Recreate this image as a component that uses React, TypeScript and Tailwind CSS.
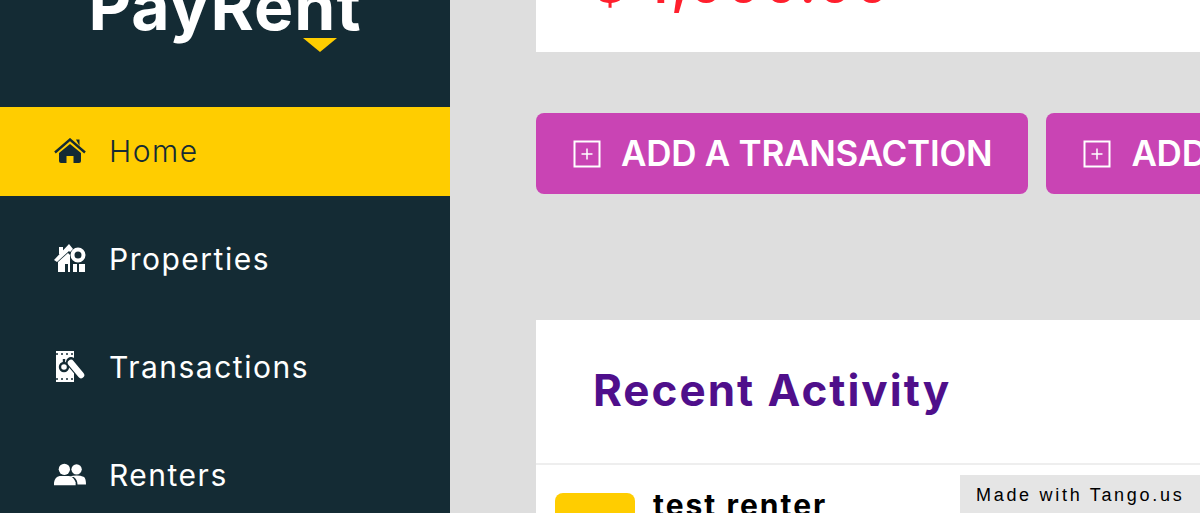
const font = "font-['Inter','Liberation_Sans',sans-serif]";

function HomeIcon() {
  return (
    <svg viewBox="0 0 32 25" className="w-8 h-[25px] text-[#142b34]" fill="currentColor">
      <path d="M22 1.5 H25.5 V8" />
      <path d="M1 14.5 L16 1.5 L31 14.5" fill="none" stroke="currentColor" strokeWidth="2.4" />
      <path d="M5 15 L16 6 L27 15 V23 Q27 25 25 25 H19.5 V18 H12.5 V25 H7 Q5 25 5 23 Z" />
    </svg>
  );
}

function PropertiesIcon() {
  return (
    <svg viewBox="0 0 32 32" className="w-8 h-8 text-white" fill="currentColor">
      {/* roof + chimney */}
      <path d="M0 17 L15 1 L19 6 L16 9 L15 8 L3 19 Z" />
      <rect x="5" y="4" width="4" height="7" />
      {/* walls with window */}
      <path d="M4 19 L14 10 L16 12 V29 H4 Z" />
      <rect x="11" y="21" width="3" height="8" fill="#142b34" />
      {/* badge */}
      <circle cx="24" cy="12" r="5.5" fill="none" stroke="currentColor" strokeWidth="4" />
      <rect x="19" y="21" width="4" height="8" />
      <rect x="25" y="21" width="6" height="8" />
    </svg>
  );
}

function TransactionsIcon() {
  const dots = [3, 8, 13, 18];
  return (
    <svg viewBox="0 0 32 32" className="w-8 h-8 text-white" fill="currentColor">
      {/* receipt */}
      <rect x="2" y="0" width="18" height="31" />
      {dots.map((x) => (
        <g key={x} fill="#142b34">
          <circle cx={x} cy="3" r="1" />
          <circle cx={x} cy="28" r="1" />
        </g>
      ))}
      <circle cx="10" cy="16" r="4" fill="none" stroke="#142b34" strokeWidth="2.4" />
      <path d="M10 8 V12" stroke="#142b34" strokeWidth="2.4" />
      {/* hand */}
      <path d="M17 11 L28 24" stroke="#142b34" strokeWidth="10" strokeLinecap="round" />
      <path d="M17 12 L27 24" stroke="currentColor" strokeWidth="6.5" strokeLinecap="round" />
    </svg>
  );
}

function RentersIcon() {
  return (
    <svg viewBox="0 0 34 24" className="w-[34px] h-6 text-white" fill="currentColor">
      <circle cx="24" cy="6" r="5.5" />
      <path d="M16 14 Q24 11 32 14 Q34 16 34 22 H25 Q25 17 21 14 Z" />
      <circle cx="11" cy="6" r="6" />
      <path d="M0 23 V20 Q1 14 6 13 H16 Q21 14 23 20 V23 Z" />
    </svg>
  );
}

function PlusBox() {
  return (
    <svg viewBox="0 0 28 28" className="w-7 h-7 shrink-0" fill="none" stroke="white" strokeWidth="2">
      <rect x="1.5" y="1.5" width="25" height="25" />
      <path d="M14 8.5 V19.5 M8.5 14 H19.5" strokeWidth="1.5" />
    </svg>
  );
}

function NavItem({ icon, label, active }: { icon: React.ReactNode; label: string; active?: boolean }) {
  return (
    <div
      className={`flex items-center h-[89px] pl-[54px] gap-[23px] pb-[2px] ${
        active ? "bg-[#ffcd00] text-[#142b34] font-light" : "text-white"
      }`}
    >
      <span className="w-8 flex justify-center">{icon}</span>
      <span className="text-[30px] leading-none tracking-[1.5px]">{label}</span>
    </div>
  );
}

function AddButton({ label }: { label: string }) {
  return (
    <div className="flex items-center shrink-0 h-[81px] pl-[37px] pr-[36px] gap-[20px] rounded-lg bg-[#c944b4] text-white">
      <PlusBox />
      <span className="text-[35px] font-semibold leading-none tracking-[-0.25px] whitespace-nowrap">{label}</span>
    </div>
  );
}

export default function App() {
  return (
    <div className={`relative flex w-[1200px] h-[513px] overflow-hidden bg-[#dedede] ${font}`}>
      {/* Sidebar */}
      <aside className="w-[450px] shrink-0 bg-[#142b34]">
        <div className="h-[107px] flex flex-col items-center">
          <span className="text-[66px] font-bold leading-[52px] tracking-[1px] text-white -mt-[20px]">
            PayRent
          </span>
          <span className="w-0 h-0 ml-[190px] mt-[6px] border-x-[17px] border-x-transparent border-t-[14px] border-t-[#ffcd00]" />
        </div>
        <nav className="flex flex-col gap-[19px]">
          <NavItem active label="Home" icon={<HomeIcon />} />
          <NavItem label="Properties" icon={<PropertiesIcon />} />
          <NavItem label="Transactions" icon={<TransactionsIcon />} />
          <NavItem label="Renters" icon={<RentersIcon />} />
        </nav>
      </aside>

      {/* Main */}
      <main className="flex-1 min-w-0 pl-[86px]">
        <div className="h-[52px] w-[800px] bg-white overflow-hidden pl-[57px]">
          <p className="text-[52px] font-semibold leading-none text-[#ff1f2d] tracking-[3px] -mt-[41px] whitespace-nowrap">
            $ 1,000.00
          </p>
        </div>
        <div className="flex gap-[18px] mt-[61px]">
          <AddButton label="ADD A TRANSACTION" />
          <AddButton label="ADD A PROPERTY" />
        </div>
        <section className="mt-[126px] w-[800px] bg-white">
          <div className="flex items-center h-[145px] pl-[57px] pb-[4px] border-b-2 border-[#eeeeee]">
            <h2 className="text-[44px] font-bold leading-none tracking-[2px] text-[#4f0f8b]">Recent Activity</h2>
          </div>
          <div className="flex gap-[18px] pl-[19px] pt-[28px]">
            <div className="w-20 h-20 rounded-lg bg-[#ffcd00]" />
            <p className="text-[30px] font-bold leading-none tracking-[2px] text-black -mt-[3px]">test renter</p>
          </div>
        </section>
      </main>

      {/* Tango badge */}
      <div className="absolute right-0 bottom-0 flex items-center w-[240px] h-[38px] pl-[16px] pt-[2px] bg-[#e5e5e5] text-black text-[18px] tracking-[2.7px] font-['Liberation_Sans',sans-serif] whitespace-nowrap">
        Made with Tango.us
      </div>
    </div>
  );
}
